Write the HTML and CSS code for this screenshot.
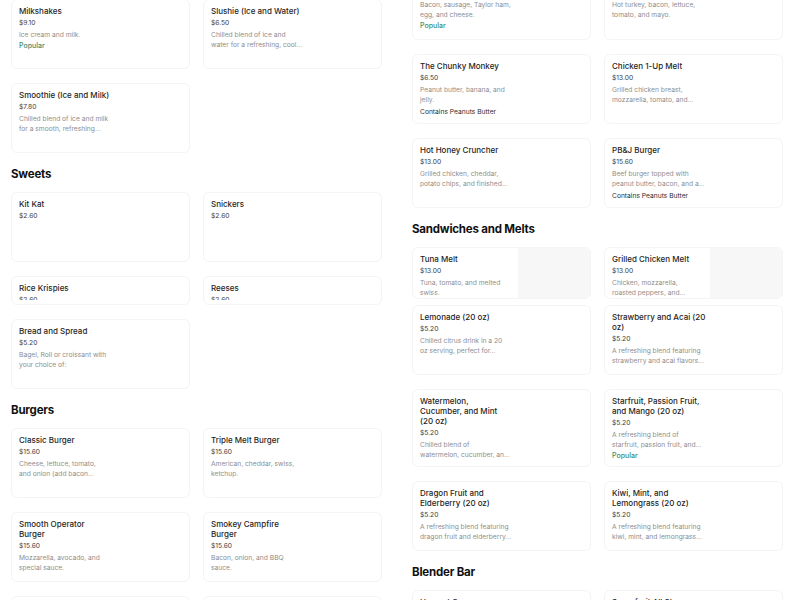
FILE: index.html
```html
<!DOCTYPE html>
<html lang="en">
<head>
<meta charset="utf-8">
<title>Menu</title>
<link rel="stylesheet" href="styles.css">
</head>
<body>
<div class="page">
  <div class="col col-left">
    <div class="grid">
      <div class="card">
        <div class="info">
          <div class="title">Milkshakes</div>
          <div class="price">$9.10</div>
          <div class="desc">Ice cream and milk.</div>
          <div class="popular">Popular</div>
        </div>
      </div>
      <div class="card">
        <div class="info">
          <div class="title">Slushie (Ice and Water)</div>
          <div class="price">$6.50</div>
          <div class="desc">Chilled blend of ice and<br>water for a refreshing, cool…</div>
        </div>
      </div>
      <div class="card">
        <div class="info">
          <div class="title">Smoothie (Ice and Milk)</div>
          <div class="price">$7.80</div>
          <div class="desc">Chilled blend of ice and milk<br>for a smooth, refreshing…</div>
        </div>
      </div>
    </div>

    <h2 class="section-title">Sweets</h2>
    <div class="grid">
      <div class="card">
        <div class="info">
          <div class="title">Kit Kat</div>
          <div class="price">$2.60</div>
        </div>
      </div>
      <div class="card">
        <div class="info">
          <div class="title">Snickers</div>
          <div class="price">$2.60</div>
        </div>
      </div>
      <div class="card short">
        <div class="info">
          <div class="title">Rice Krispies</div>
          <div class="price">$2.60</div>
        </div>
      </div>
      <div class="card short">
        <div class="info">
          <div class="title">Reeses</div>
          <div class="price">$2.60</div>
        </div>
      </div>
      <div class="card">
        <div class="info">
          <div class="title">Bread and Spread</div>
          <div class="price">$5.20</div>
          <div class="desc">Bagel, Roll or croissant with<br>your choice of:</div>
        </div>
      </div>
    </div>

    <h2 class="section-title">Burgers</h2>
    <div class="grid">
      <div class="card">
        <div class="info">
          <div class="title">Classic Burger</div>
          <div class="price">$15.60</div>
          <div class="desc">Cheese, lettuce, tomato,<br>and onion (add bacon…</div>
        </div>
      </div>
      <div class="card">
        <div class="info">
          <div class="title">Triple Melt Burger</div>
          <div class="price">$15.60</div>
          <div class="desc">American, cheddar, swiss,<br>ketchup.</div>
        </div>
      </div>
      <div class="card">
        <div class="info">
          <div class="title">Smooth Operator<br>Burger</div>
          <div class="price">$15.60</div>
          <div class="desc">Mozzarella, avocado, and<br>special sauce.</div>
        </div>
      </div>
      <div class="card">
        <div class="info">
          <div class="title">Smokey Campfire<br>Burger</div>
          <div class="price">$15.60</div>
          <div class="desc">Bacon, onion, and BBQ<br>sauce.</div>
        </div>
      </div>
      <div class="card">
        <div class="info">
          <div class="title">Veggie Burger</div>
        </div>
      </div>
      <div class="card">
        <div class="info">
          <div class="title">Double Burger</div>
        </div>
      </div>
    </div>
  </div>

  <div class="col col-right">
    <div class="grid">
      <div class="card cut">
        <div class="info">
          <div class="desc">Bacon, sausage, Taylor ham,<br>egg, and cheese.</div>
          <div class="popular">Popular</div>
        </div>
      </div>
      <div class="card cut">
        <div class="info">
          <div class="desc">Hot turkey, bacon, lettuce,<br>tomato, and mayo.</div>
        </div>
      </div>
      <div class="card">
        <div class="info">
          <div class="title">The Chunky Monkey</div>
          <div class="price">$6.50</div>
          <div class="desc">Peanut butter, banana, and<br>jelly.</div>
          <div class="note">Contains Peanuts Butter</div>
        </div>
      </div>
      <div class="card">
        <div class="info">
          <div class="title">Chicken 1-Up Melt</div>
          <div class="price">$13.00</div>
          <div class="desc">Grilled chicken breast,<br>mozzarella, tomato, and…</div>
        </div>
      </div>
      <div class="card">
        <div class="info">
          <div class="title">Hot Honey Cruncher</div>
          <div class="price">$13.00</div>
          <div class="desc">Grilled chicken, cheddar,<br>potato chips, and finished…</div>
        </div>
      </div>
      <div class="card">
        <div class="info">
          <div class="title">PB&amp;J Burger</div>
          <div class="price">$15.60</div>
          <div class="desc">Beef burger topped with<br>peanut butter, bacon, and a…</div>
          <div class="note">Contains Peanuts Butter</div>
        </div>
      </div>
    </div>

    <h2 class="section-title">Sandwiches and Melts</h2>
    <div class="grid grid-tight">
      <div class="card with-image">
        <div class="info">
          <div class="title">Tuna Melt</div>
          <div class="price">$13.00</div>
          <div class="desc">Tuna, tomato, and melted<br>swiss.</div>
        </div>
        <div class="thumb"></div>
      </div>
      <div class="card with-image">
        <div class="info">
          <div class="title">Grilled Chicken Melt</div>
          <div class="price">$13.00</div>
          <div class="desc">Chicken, mozzarella,<br>roasted peppers, and…</div>
        </div>
        <div class="thumb"></div>
      </div>
    </div>
    <div class="grid">
      <div class="card">
        <div class="info">
          <div class="title">Lemonade (20 oz)</div>
          <div class="price">$5.20</div>
          <div class="desc">Chilled citrus drink in a 20<br>oz serving, perfect for…</div>
        </div>
      </div>
      <div class="card">
        <div class="info">
          <div class="title">Strawberry and Acai (20<br>oz)</div>
          <div class="price">$5.20</div>
          <div class="desc">A refreshing blend featuring<br>strawberry and acai flavors…</div>
        </div>
      </div>
      <div class="card">
        <div class="info">
          <div class="title">Watermelon,<br>Cucumber, and Mint<br>(20 oz)</div>
          <div class="price">$5.20</div>
          <div class="desc">Chilled blend of<br>watermelon, cucumber, an…</div>
        </div>
      </div>
      <div class="card">
        <div class="info">
          <div class="title">Starfruit, Passion Fruit,<br>and Mango (20 oz)</div>
          <div class="price">$5.20</div>
          <div class="desc">A refreshing blend of<br>starfruit, passion fruit, and…</div>
          <div class="popular">Popular</div>
        </div>
      </div>
      <div class="card">
        <div class="info">
          <div class="title">Dragon Fruit and<br>Elderberry (20 oz)</div>
          <div class="price">$5.20</div>
          <div class="desc">A refreshing blend featuring<br>dragon fruit and elderberry…</div>
        </div>
      </div>
      <div class="card">
        <div class="info">
          <div class="title">Kiwi, Mint, and<br>Lemongrass (20 oz)</div>
          <div class="price">$5.20</div>
          <div class="desc">A refreshing blend featuring<br>kiwi, mint, and lemongrass…</div>
        </div>
      </div>
    </div>

    <h2 class="section-title">Blender Bar</h2>
    <div class="grid">
      <div class="card">
        <div class="info">
          <div class="title">Harvest Greens</div>
        </div>
      </div>
      <div class="card">
        <div class="info">
          <div class="title">Superfruit All Stars</div>
        </div>
      </div>
    </div>
  </div>
</div>
</body>
</html>
```

FILE: styles.css
```css
* {
  box-sizing: border-box;
}

html, body {
  margin: 0;
  padding: 0;
  background: #ffffff;
  overflow: hidden;
}

body {
  font-family: Inter, "Liberation Sans", sans-serif;
  color: #1f1f1f;
}

.page {
  display: flex;
  gap: 30px;
  padding-left: 11px;
  align-items: flex-start;
}

.col {
  width: 371px;
  flex: none;
}

.col-left {
  margin-top: -1px;
}

.col-right {
  margin-top: -30px;
}

.grid {
  display: grid;
  grid-template-columns: 1fr 1fr;
  column-gap: 13px;
  row-gap: 14px;
}

.grid-tight {
  margin-bottom: 6px;
}

.section-title {
  margin: 13px 0 10px;
  font-size: 11.5px;
  line-height: 16px;
  font-weight: 700;
  letter-spacing: -0.2px;
  color: #111111;
}

.card {
  min-height: 70px;
  border: 1px solid #f4f4f4;
  border-radius: 6px;
  padding: 6px 7px 5px;
  background: #ffffff;
  overflow: hidden;
}

.card.short {
  min-height: 0;
  height: 29px;
}

.card.short .info {
  height: 17px;
  overflow: hidden;
}

.card.cut {
  padding-top: 29px;
}

.card.with-image {
  min-height: 0;
  height: 52px;
  display: flex;
  justify-content: space-between;
  padding: 6px 0 0 7px;
}

.thumb {
  width: 72px;
  flex: none;
  margin-top: -6px;
  background: #f7f7f7;
}

.info {
  white-space: nowrap;
}

.title {
  font-size: 8px;
  line-height: 10px;
  font-weight: 500;
  color: #1f1f1f;
  margin-bottom: 2px;
}

.price {
  font-size: 6.7px;
  line-height: 10px;
  color: #3a3a3a;
  margin-bottom: 2px;
}

.desc {
  font-size: 6.7px;
  line-height: 10px;
  color: #8e8e8e;
}

.popular {
  margin-top: 1px;
  font-size: 7px;
  line-height: 10px;
  font-weight: 500;
  color: #3d8c6c;
}

.note {
  margin-top: 2px;
  font-size: 6.7px;
  line-height: 10px;
  color: #2e2e2e;
}
```
